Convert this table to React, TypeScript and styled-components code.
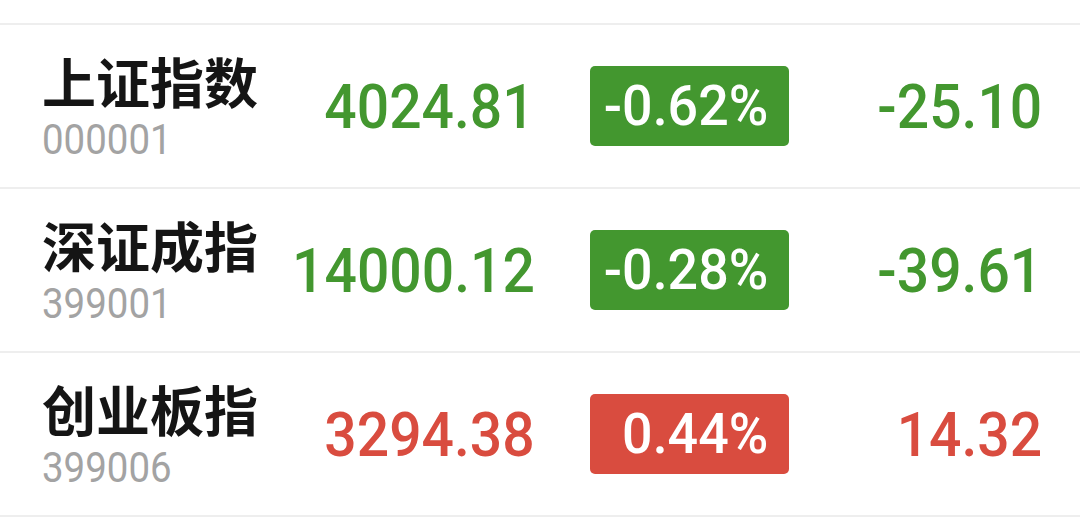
import React from 'react'
import styled, { createGlobalStyle } from 'styled-components'

const GlobalStyle = createGlobalStyle`
    body {
        margin: 0;
        background: #ffffff;
    }
`;

const GREEN = '#43972f';
const RED = '#d94c3f';

const List = styled.div`
    padding-top: 23px;
    width: 1080px;
`;

const Row = styled.div`
    display: grid;
    grid-template-columns: 250px 243px 254px 1fr;
    align-items: center;
    height: 162px;
    padding: 0 38px 0 42px;
    border-top: 2px solid #eeeeee;

    &:last-child {
        border-bottom: 2px solid #eeeeee;
    }
`;

const Info = styled.div`
    display: flex;
    flex-direction: column;
`;

const Name = styled.span`
    font-family: "Noto Sans CJK SC", sans-serif;
    font-weight: 700;
    font-size: 54px;
    line-height: 58px;
    color: #151515;
`;

// narrow digits: the original uses a DIN-like face, Roboto squeezed is close
const Num = styled.span`
    display: inline-block;
    font-family: Roboto, "DejaVu Sans", sans-serif;
    transform-origin: left center;
    white-space: nowrap;
`;

const Code = styled(Num)`
    font-size: 42px;
    line-height: 40px;
    color: #a3a3a3;
    margin-top: 10px;
    transform: scaleX(0.915);
`;

const Value = styled.div<{ $up: boolean }>`
    display: flex;
    justify-content: flex-end;
    color: ${p => (p.$up ? RED : GREEN)};
`;

const Big = styled(Num)`
    font-size: 62px;
    font-weight: 500;
    transform: scaleX(0.92);
    transform-origin: right center;
`;

const Badge = styled.div<{ $up: boolean }>`
    justify-self: end;
    width: 199px;
    height: 80px;
    box-sizing: border-box;
    border-radius: 5px;
    padding-right: 21px;
    display: flex;
    align-items: center;
    justify-content: flex-end;
    background: ${p => (p.$up ? RED : GREEN)};
    color: #ffffff;
`;

const BadgeText = styled(Num)`
    font-size: 56px;
    font-weight: 500;
    transform: scaleX(0.96);
    transform-origin: right center;
`;

interface Index {
    name: string;
    code: string;
    price: string;
    percent: string;
    change: string;
    up: boolean;
}

const indexes: Index[] = [
    { name: '上证指数', code: '000001', price: '4024.81', percent: '-0.62%', change: '-25.10', up: false },
    { name: '深证成指', code: '399001', price: '14000.12', percent: '-0.28%', change: '-39.61', up: false },
    { name: '创业板指', code: '399006', price: '3294.38', percent: '0.44%', change: '14.32', up: true },
];

const App: React.FC = () => {
    return (
        <>
            <GlobalStyle />
            <List>
                {indexes.map(item =>
                    <Row key={item.code}>
                        <Info>
                            <Name>{item.name}</Name>
                            <Code>{item.code}</Code>
                        </Info>
                        <Value $up={item.up}>
                            <Big>{item.price}</Big>
                        </Value>
                        <Badge $up={item.up}>
                            <BadgeText>{item.percent}</BadgeText>
                        </Badge>
                        <Value $up={item.up}>
                            <Big>{item.change}</Big>
                        </Value>
                    </Row>
                )}
            </List>
        </>
    )
}

export default App
